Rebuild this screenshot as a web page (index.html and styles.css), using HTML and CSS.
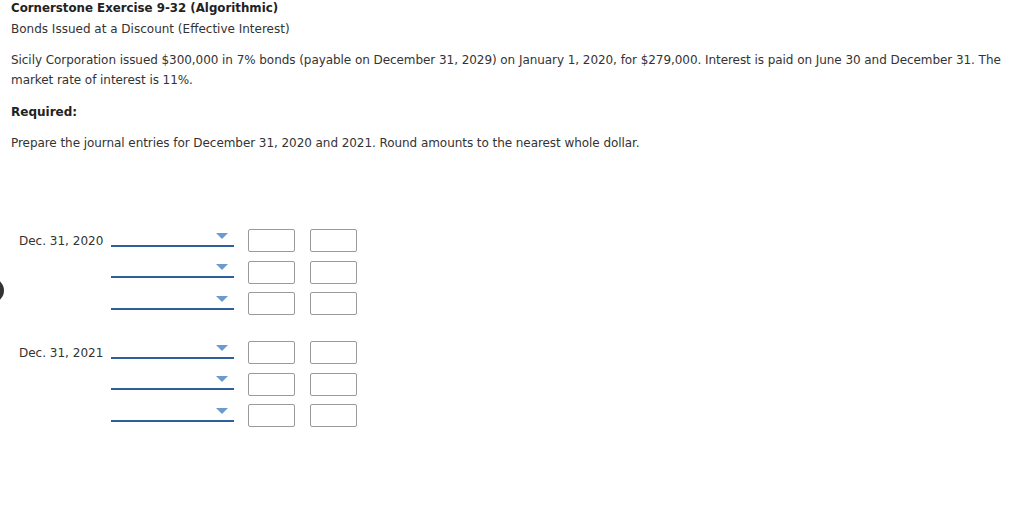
FILE: index.html
```html
<!DOCTYPE html>
<html>
<head>
<meta charset="utf-8">
<link rel="stylesheet" href="styles.css">
</head>
<body>
<div class="page">
  <div class="title">Cornerstone Exercise 9-32 (Algorithmic)</div>
  <div class="subtitle">Bonds Issued at a Discount (Effective Interest)</div>
  <p class="para">Sicily Corporation issued $300,000 in 7% bonds (payable on December 31, 2029) on January 1, 2020, for $279,000. Interest is paid on June 30 and December 31. The market rate of interest is 11%.</p>
  <div class="required">Required:</div>
  <p class="prepare">Prepare the journal entries for December 31, 2020 and 2021. Round amounts to the nearest whole dollar.</p>

  <div class="journal">
    <div class="group">
      <div class="row"><div class="date">Dec. 31, 2020</div><div class="select"><span class="arrow"></span></div><div class="input"></div><div class="input"></div></div>
      <div class="row"><div class="date"></div><div class="select"><span class="arrow"></span></div><div class="input"></div><div class="input"></div></div>
      <div class="row"><div class="date"></div><div class="select"><span class="arrow"></span></div><div class="input"></div><div class="input"></div></div>
    </div>
    <div class="group">
      <div class="row"><div class="date">Dec. 31, 2021</div><div class="select"><span class="arrow"></span></div><div class="input"></div><div class="input"></div></div>
      <div class="row"><div class="date"></div><div class="select"><span class="arrow"></span></div><div class="input"></div><div class="input"></div></div>
      <div class="row"><div class="date"></div><div class="select"><span class="arrow"></span></div><div class="input"></div><div class="input"></div></div>
    </div>
  </div>
</div>
<div class="side-tab"></div>
</body>
</html>
```
FILE: styles.css
```css
html, body {
  margin: 0;
  padding: 0;
  background: #fff;
}
body {
  font-family: "DejaVu Sans", Verdana, sans-serif;
  font-size: 12px;
  color: #333;
}
.page {
  padding-left: 11px;
  padding-top: 1px;
}
.title {
  font-weight: bold;
  color: #222;
  line-height: 14px;
  font-size: 11.8px;
}
.subtitle {
  margin-top: 4px;
  line-height: 20px;
}
.para {
  margin: 11px 0 0;
  line-height: 20px;
  letter-spacing: -0.06px;
}
.required {
  margin-top: 12px;
  line-height: 20px;
  font-weight: bold;
  color: #222;
}
.prepare {
  margin: 11px 0 0;
  line-height: 20px;
  letter-spacing: -0.06px;
}
.journal {
  margin-top: 72px;
  margin-left: 8px;
}
.group + .group {
  margin-top: 17.5px;
}
.row {
  display: flex;
  align-items: center;
  height: 31.5px;
}
.date {
  width: 92px;
  line-height: 14px;
  padding-top: 1px;
}
.select {
  position: relative;
  width: 123px;
  height: 15px;
  border-bottom: 2px solid #2f5f98;
  margin-bottom: 5px;
  margin-right: 14px;
}
.arrow {
  position: absolute;
  right: 6px;
  top: 3px;
  width: 0;
  height: 0;
  border-left: 6px solid transparent;
  border-right: 6px solid transparent;
  border-top: 6px solid #6b9bcc;
}
.input {
  box-sizing: border-box;
  width: 47px;
  height: 23px;
  border: 1px solid #9a9a9a;
  border-radius: 2px;
  background: #fff;
  margin-right: 15px;
}
.side-tab {
  position: absolute;
  left: -21px;
  top: 278px;
  width: 25px;
  height: 25px;
  border-radius: 50%;
  background: #333;
}
```
